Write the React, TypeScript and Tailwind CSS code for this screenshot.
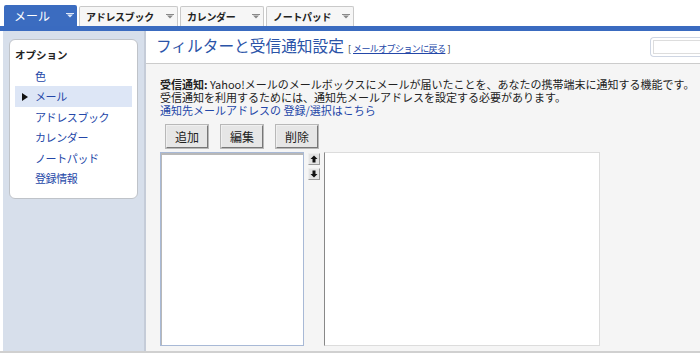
import React from 'react';

const font = { fontFamily: '"Noto Sans CJK JP", "Liberation Sans", sans-serif' };

const tabs = [
  { title: 'アドレスブック', width: 'w-[99px]' },
  { title: 'カレンダー', width: 'w-[84px]' },
  { title: 'ノートパッド', width: 'w-[88px]' },
];

const menu = ['色', 'メール', 'アドレスブック', 'カレンダー', 'ノートパッド', '登録情報'];

const Caret = ({ color }: { color: string }) => (
  <svg width="8" height="5" viewBox="0 0 8 5" className="shrink-0">
    <rect x="0" y="0" width="8" height="1" fill={color} />
    <path d="M1 1.5 H7 L4 4.5 Z" fill={color} />
  </svg>
);

const ArrowBtn = ({ up }: { up?: boolean }) => (
  <button className="flex h-3 w-3 items-center justify-center border border-t-[#eee] border-l-[#eee] border-b-[#999] border-r-[#999] bg-[#e4e4e4]">
    <svg width="8" height="8" viewBox="0 0 8 8">
      {up ? (
        <path d="M4 0.5 L7.5 4 H5.5 V7.5 H2.5 V4 H0.5 Z" fill="#111" />
      ) : (
        <path d="M4 7.5 L7.5 4 H5.5 V0.5 H2.5 V4 H0.5 Z" fill="#111" />
      )}
    </svg>
  </button>
);

const Btn = ({ children }: { children: React.ReactNode }) => (
  <button className="flex h-[23px] w-[42px] items-center justify-center border border-t-[#f0f0f0] border-l-[#f0f0f0] border-b-[#777] border-r-[#777] bg-[#e6e6e6] text-[12px] text-[#222] shadow-[0_0_0_1px_#b8b8b8]">
    {children}
  </button>
);

const App = () => {
  return (
    <div className="h-[358px] w-[700px] overflow-hidden bg-white" style={font}>
      <nav className="flex h-[26px] items-end gap-[2px] pl-1">
        <div className="flex h-[21px] w-[73px] items-center justify-between rounded-t-[2px] bg-[#3b6cc0] pl-[10px] pr-[3px] text-[12px] text-white">
          <span>メール</span>
          <Caret color="#dfe8f7" />
        </div>
        {tabs.map((tab) => (
          <div
            key={tab.title}
            className={`flex h-[20px] ${tab.width} items-center justify-between rounded-t-[2px] border border-b-0 border-[#c9c9c9] bg-[#f6f6f6] pl-[6px] pr-[3px] text-[10px] font-bold text-[#222]`}
          >
            <span className="tracking-[-0.3px]">{tab.title}</span>
            <Caret color="#888" />
          </div>
        ))}
      </nav>
      <div className="h-[5px] bg-[#3a6bc0]" />
      <div className="flex h-[322px] border-b-2 border-[#d0d0d0]">
        <aside className="ml-[3px] w-[141px] bg-[#d7dfeb] px-[6px] pt-2">
          <div className="h-[160px] rounded-md border border-[#bfc3c9] bg-white px-[5px] pt-[8px]">
            <h4 className="text-[10.5px] font-bold leading-[14px] text-[#222]">オプション</h4>
            <ul className="mt-[4px]">
              {menu.map((item) => (
                <li
                  key={item}
                  className={`flex h-[20.4px] items-center text-[11px] text-[#2447a8] ${
                    item === 'メール' ? 'bg-[#dde6f6]' : ''
                  }`}
                >
                  <span className="flex w-5 justify-center">
                    {item === 'メール' && (
                      <svg width="6" height="8" viewBox="0 0 6 8">
                        <path d="M0 0 L6 4 L0 8 Z" fill="#111" />
                      </svg>
                    )}
                  </span>
                  <span className="tracking-[-0.4px]">{item}</span>
                </li>
              ))}
            </ul>
          </div>
        </aside>
        <main className="flex-1 border-l-2 border-[#c5ccd8] bg-[#f5f5f5]">
          <div className="flex h-[33px] items-center justify-between border-b border-[#cccccc] bg-white pl-[10px]">
            <div className="flex items-baseline gap-[4px]">
              <h1 className="text-[15.7px] leading-none text-[#2b54a8]">フィルターと受信通知設定</h1>
              <span className="text-[9px] text-[#222]">
                [ <a className="text-[#2447a8] underline tracking-[-0.6px]">メールオプションに戻る</a> ]
              </span>
            </div>
            <div className="h-[20px] w-[50px] rounded-l-[4px] border border-r-0 border-[#cfd6e3] p-[2px] pr-0">
              <div className="h-full w-full border border-r-0 border-[#ddd] bg-white" />
            </div>
          </div>
          <div className="pl-[14px] pt-[14px]">
            <div className="text-[11px] leading-[13px] text-[#222]">
              <p className="whitespace-nowrap">
                <b>受信通知:</b> Yahoo!メールのメールボックスにメールが届いたことを、あなたの携帯端末に通知する機能です。
              </p>
              <p className="whitespace-nowrap">
                受信通知を利用するためには、通知先メールアドレスを設定する必要があります。
              </p>
              <p className="text-[#2447a8]">通知先メールアドレスの 登録/選択はこちら</p>
            </div>
            <div className="ml-[6px] mt-[8px] flex gap-[13px]">
              <Btn>追加</Btn>
              <Btn>編集</Btn>
              <Btn>削除</Btn>
            </div>
            <div className="mt-[4px] flex items-start">
              <div className="h-[194px] w-[144px] border border-[#a8b9d6] bg-white">
                <div className="h-full w-full border-t-2 border-l border-[#b8b8b8]" />
              </div>
              <div className="ml-[4px] mt-[1px] flex flex-col gap-[3px]">
                <ArrowBtn up />
                <ArrowBtn />
              </div>
              <div className="ml-[4px] h-[194px] w-[276px] border border-[#dcdcdc] border-l-[#888] bg-white" />
            </div>
          </div>
        </main>
      </div>
    </div>
  );
};

export default App;
